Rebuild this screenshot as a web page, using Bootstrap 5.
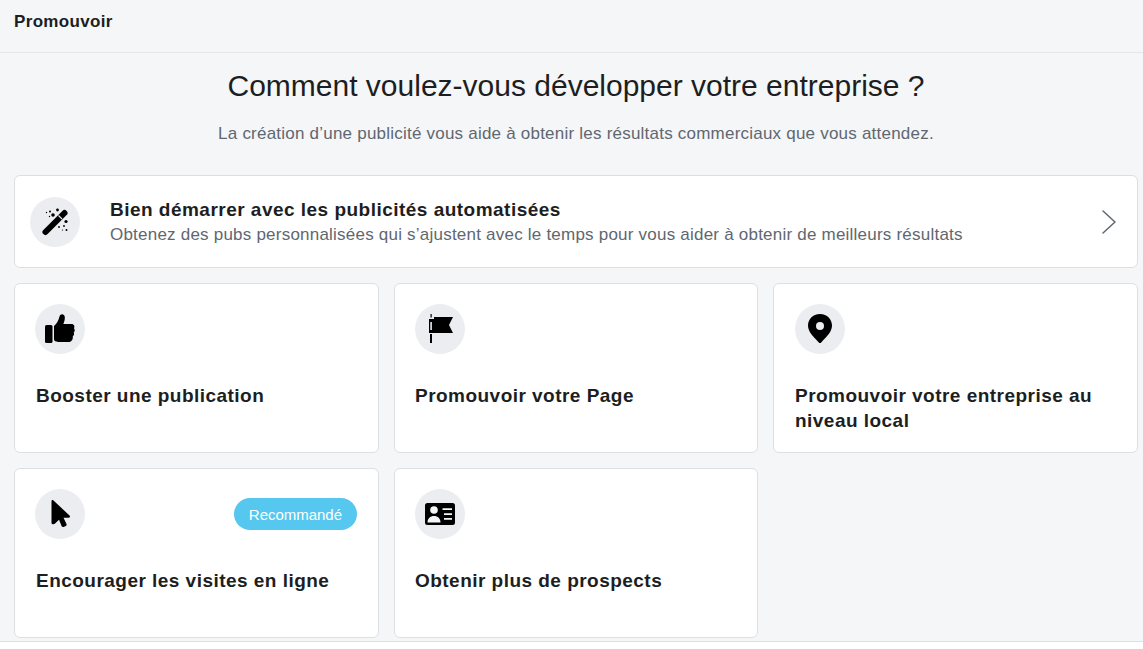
<!doctype html>
<html lang="fr"><head><meta charset="utf-8"><title>Promouvoir</title>
<link href="https://cdn.jsdelivr.net/npm/bootstrap@5.3.0/dist/css/bootstrap.min.css" rel="stylesheet">
<style>
html,body{height:649px;overflow:hidden}
body{font-family:"Liberation Sans",Arial,sans-serif;background:#fff;color:#1c1e21}
.shell{height:642px;background:#f5f6f8;border-bottom:1px solid #dddfe2}
.topbar{height:53px;border-bottom:1px solid #e4e6ea;padding:13px 14px 0;font-size:17px;font-weight:700;line-height:18px;letter-spacing:.34px}
.headline{font-size:30px;font-weight:400;line-height:34px;margin:16px 0 0;padding-left:9px}
.subline{font-size:17px;line-height:20px;color:#606770;margin:21px 0 0;letter-spacing:.22px;padding-left:9px}
.stack{padding:31px 5px 0 14px}
.tile{background:#fff;border:1px solid #dddfe2;border-radius:6px}
.banner{height:93px;padding:0 20px 0 15px}
.disc{width:50px;height:50px;border-radius:50%;background:#ebedf0;flex:none}
.disc svg{width:32px;height:32px;display:block}
.banner-copy{margin-left:30px;padding-top:1px}
.banner-title{font-size:19px;font-weight:700;line-height:24px;letter-spacing:.48px}
.banner-sub{font-size:17px;line-height:24px;color:#606770;letter-spacing:.22px;margin-top:1px}
.tile-grid{display:grid;grid-template-columns:365px 364px 365px;gap:15px;margin-top:15px}
.cardbox{height:170px;padding:20px 20px 0 20px}
.cardtop{height:50px}
.cardname{font-size:19px;font-weight:700;line-height:25px;letter-spacing:.47px;margin:29px 0 0}
.cardbox-end{padding-left:21px}
.cardbox-first .cardname{margin-left:1px}
.pill{background:#56c7ee;color:#fff;font-size:15px;line-height:33px;height:32px;padding:0 15px;border-radius:16px;margin-right:1px;letter-spacing:-.02px}
</style></head>
<body>
<div class="shell">
  <div class="topbar">Promouvoir</div>
  <h1 class="headline text-center">Comment voulez-vous développer votre entreprise ?</h1>
  <p class="subline text-center">La création d’une publicité vous aide à obtenir les résultats commerciaux que vous attendez.</p>
  <div class="stack">
    <div class="tile banner d-flex align-items-center">
      <div class="disc d-flex align-items-center justify-content-center">
        <svg viewBox="0 0 32 32"><path d="M6.500 26l19-19" stroke="#000" stroke-width="6" stroke-linecap="round"/><path d="M19.500 9.500l3.500 3.500" stroke="#ebedf0" stroke-width="1.100"/><circle cx="18.500" cy="4" r="1.400"/><circle cx="14" cy="9" r="1.800"/><circle cx="11" cy="5.500" r="1"/><circle cx="7.500" cy="6.500" r=".7"/><circle cx="10.500" cy="10.500" r=".7"/><circle cx="27" cy="15.500" r="1.600"/><circle cx="20" cy="21" r=".9"/><circle cx="25" cy="20" r=".9"/><circle cx="27.500" cy="24" r="1"/><circle cx="23.500" cy="24" r=".6"/></svg>
      </div>
      <div class="banner-copy flex-grow-1">
        <div class="banner-title">Bien démarrer avec les publicités automatisées</div>
        <div class="banner-sub">Obtenez des pubs personnalisées qui s’ajustent avec le temps pour vous aider à obtenir de meilleurs résultats</div>
      </div>
      <svg width="16" height="26" viewBox="0 0 16 26" fill="none" stroke="#606770" stroke-width="1.500" stroke-linecap="round" stroke-linejoin="round"><path d="M2 2l12 11L2 24"/></svg>
    </div>
    <div class="tile-grid">
      <div class="tile cardbox cardbox-first">
        <div class="cardtop d-flex"><div class="disc d-flex align-items-center justify-content-center">
          <svg viewBox="0 0 32 32"><rect x="1" y="12" width="7.500" height="18" rx="1.500"/><path d="M10 13c3-2.500 4.500-5.500 5.500-9.500C16.200 .5 20.500.5 20.800 4c.2 2.700-.6 5-1.500 7h8c3 0 3.700 2.700 2.700 4.200 1 1.300 1 3-.2 4.200.6 1.500.2 3-1 3.800.4 3-1.300 5.800-4 5.800H15c-2.600 0-5-.8-5-3z"/></svg>
        </div></div>
        <div class="cardname">Booster une publication</div>
      </div>
      <div class="tile cardbox">
        <div class="cardtop d-flex"><div class="disc d-flex align-items-center justify-content-center">
          <svg viewBox="0 0 32 32"><path fill-rule="evenodd" d="M6.500 1h1.200v3.500H6.500zM6 21h2v9H6zM5 6h5v14H5zM6.300 9v8h1.600V9z"/><path d="M10 4h19l-4 8 4 8H10z"/></svg>
        </div></div>
        <div class="cardname">Promouvoir votre Page</div>
      </div>
      <div class="tile cardbox cardbox-end">
        <div class="cardtop d-flex"><div class="disc d-flex align-items-center justify-content-center">
          <svg viewBox="0 0 32 32"><path fill-rule="evenodd" d="M16 1C8.700 1 4 6.500 4 12.500c0 6.500 5.500 11 10.800 17 .6.800 1.800.8 2.400 0C22.500 23.500 28 19 28 12.500 28 6.500 23.300 1 16 1zM16 9a4 4 0 1 1 0 8 4 4 0 0 1 0-8z"/></svg>
        </div></div>
        <div class="cardname">Promouvoir votre entreprise au niveau local</div>
      </div>
      <div class="tile cardbox cardbox-first">
        <div class="cardtop d-flex justify-content-between align-items-center">
          <div class="disc d-flex align-items-center justify-content-center">
            <svg viewBox="0 0 32 32"><path d="M7.500 3.500c0-1.300 1-1.800 2-1L25.500 17.500c1 .9.500 2.300-.8 2.300h-5.200l3 6.300c.3.800 0 1.500-.7 1.800l-2.300 1c-.8.300-1.500 0-1.800-.7l-2.700-6.400-4.200 3.900c-.9.800-3.300.6-3.300-.8z"/></svg>
          </div>
          <span class="pill">Recommandé</span>
        </div>
        <div class="cardname">Encourager les visites en ligne</div>
      </div>
      <div class="tile cardbox">
        <div class="cardtop d-flex"><div class="disc d-flex align-items-center justify-content-center">
          <svg viewBox="0 0 32 32"><path fill-rule="evenodd" d="M3.500 5h25A2.500 2.500 0 0 1 31 7.500v17a2.500 2.500 0 0 1-2.500 2.500h-25A2.500 2.500 0 0 1 1 24.500v-17A2.500 2.500 0 0 1 3.500 5z"/><circle cx="10" cy="12" r="3.800" fill="#f5f6f8"/><path d="M3.500 24.500c0-4 2.700-6.500 6.500-6.500s6.500 2.500 6.500 6.500z" fill="#f5f6f8"/><path d="M18.500 10.300H28v1.800h-9.500zM20 15.300h8v1.800h-8zM20 20h8v1.800h-8z" fill="#f5f6f8"/></svg>
        </div></div>
        <div class="cardname">Obtenir plus de prospects</div>
      </div>
    </div>
  </div>
</div>
<script src="https://cdn.jsdelivr.net/npm/bootstrap@5.3.0/dist/js/bootstrap.bundle.min.js"></script>
</body></html>
